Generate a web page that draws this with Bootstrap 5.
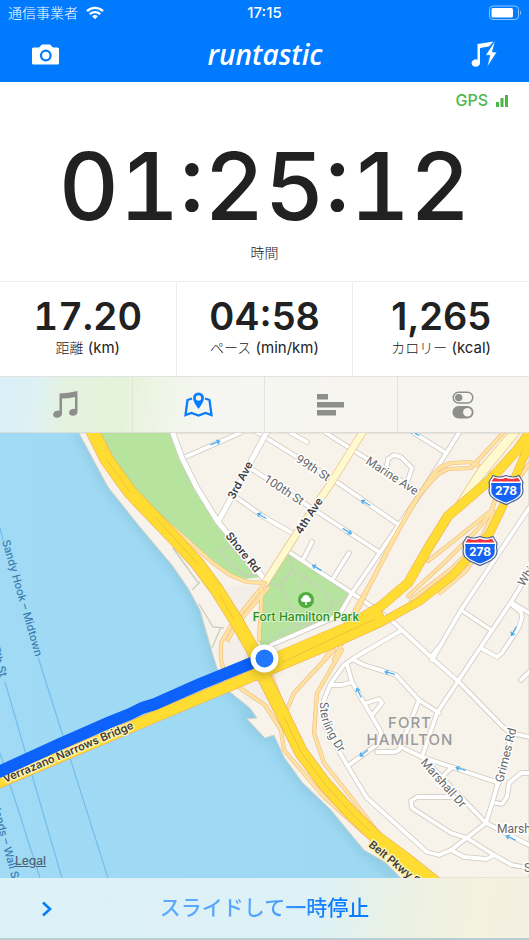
<!DOCTYPE html>
<html lang="ja">
<head>
<meta charset="utf-8">
<meta name="viewport" content="width=device-width, initial-scale=1">
<title>runtastic</title>
<link href="https://cdn.jsdelivr.net/npm/bootstrap@5.3.0/dist/css/bootstrap.min.css" rel="stylesheet">
<style>
  body { font-family: Inter, "Noto Sans CJK JP", sans-serif; color: #212121; background: #fff; }
  svg { display: block; }
  .app-head { background: #007aff; color: #fff; }
  .status-row { height: 26px; font-size: 14px; line-height: 26px; }
  .status-row .carrier { font-weight: 300; }
  .status-row .clock { font-weight: 500; font-size: 15px; }
  .brand-row { height: 56px; }
  .brand { font: italic 600 28px/54px "Open Sans", sans-serif; }
  .plain { background: none; border: 0; padding: 0; color: inherit; }
  .gps { color: #4cb648; font-size: 16px; font-weight: 500; line-height: 20px; padding: 8px 21px 0 0; }
  .timer-panel { height: 199px; }
  .timer { font-size: 93px; font-weight: 500; line-height: 100px; margin-top: 26px; font-variant-numeric: tabular-nums; }
  .caption { font-size: 14px; font-weight: 300; line-height: 20px; }
  .timer + .caption { margin-top: 7px; }
  .stats { border-top: 1px solid #ececec; border-bottom: 1px solid #e2e2e0; height: 96px; }
  .stats > div + div { border-left: 1px solid #ececec; }
  .stat-value { font-size: 38px; font-weight: 600; line-height: 38px; padding-top: 15px; box-sizing: content-box; }
  .stat-value.even { font-variant-numeric: tabular-nums; }
  .stats .caption { font-size: 15px; font-weight: 400; line-height: 26px; }
  .stats .jp { font-weight: 300; font-size: 14px; }
  .tabs { height: 56px; color: #8e8e8c; border-bottom: 1px solid #dcdcd8;
    background: linear-gradient(97deg, #d9f0f9 0, #def1f3 7%, #e5f2df 13%, #e6f3da 24%, #f1f5e9 32%, #f5f6f2 40%, #f7f5f0 70%, #f6f5f0 100%); }
  .tabs button + button { border-left: 1px solid #e1e4dc; }
  .tabs .current { color: #0a7cff; }
  .legal { left: 15px; bottom: 9px; font-size: 12px; line-height: 16px; font-weight: 500; color: #4c6473; }
  .map svg { width: 100%; height: auto; }
  .map text { font-family: Inter, sans-serif; paint-order: stroke; stroke-linejoin: round; }
  .case, .road { fill: none; stroke-linecap: round; stroke-linejoin: round; }
  .map .street text { font-family: Roboto, sans-serif; font-size: 12px; fill: #666; stroke: #fff; stroke-width: 3px; }
  .avenue text { font-size: 11px; font-weight: 600; fill: #3d3d3d; stroke: #fff; stroke-width: 3px; }
  .map .avenue .on-highway { stroke: #fff3b0; }
  .ferry text { font-size: 11px; font-weight: 500; fill: #3d7db3; }
  .slide-bar { height: 62px; color: #0a7cff; border-bottom: 2px solid #b9cdd3;
    background: linear-gradient(100deg, #dcf1f8 0, #ddf1f6 60%, #ebf1e4 75%, #f4f1df 90%, #f4f0e2 100%); }
  .slide-bar .words { font-size: 21px; font-weight: 500; line-height: 32px;
    background: linear-gradient(90deg, #5fa9fb 0, #55a4fb 50%, #0a7cff 82%); -webkit-background-clip: text; background-clip: text; color: transparent; }
  .slide-bar svg { left: 41px; top: 23px; }
</style>
<script src="https://cdn.jsdelivr.net/npm/bootstrap@5.3.0/dist/js/bootstrap.bundle.min.js"></script>
</head>
<body>
<div class="d-flex flex-column min-vh-100">
  <header class="app-head">
    <div class="status-row row g-0 px-2">
      <div class="col d-flex align-items-center gap-2">
        <span class="carrier">通信事業者</span>
        <svg width="18" height="14" viewBox="0 0 18 14" aria-hidden="true"><g fill="none" stroke="#fff" stroke-width="2.4"><path d="M1 5.1a11.6 11.6 0 0 1 16 0"/><path d="M3.8 8.2a7.6 7.6 0 0 1 10.4 0"/></g><path d="M9 13.2 6.2 10.3a4.2 4.2 0 0 1 5.6 0z" fill="#fff"/></svg>
      </div>
      <div class="col-auto clock">17:15</div>
      <div class="col d-flex justify-content-end align-items-center">
        <svg width="33" height="16" viewBox="0 0 33 16" aria-hidden="true"><rect x="1.500" y="1" width="29" height="13.500" rx="3.500" fill="none" stroke="#8fc5ff"/><rect x="3.500" y="3" width="21.500" height="9.500" rx="1.500" fill="#fff"/><path d="M32 5.500v4.500q1-.5 1-2.200T32 5.500" fill="#8fc5ff"/></svg>
      </div>
    </div>
    <div class="brand-row d-flex justify-content-between align-items-center px-4">
      <button class="plain ms-2" aria-label="カメラ">
        <svg width="27" height="21" viewBox="0 0 27 21"><path d="M1.500 3.500H7L10 .5h8l3 3h4.500Q27 3.500 27 5v14q0 1.500-1.500 1.500h-24Q0 20.500 0 19V5q0-1.500 1.500-1.500z" fill="#fff"/><circle cx="13.800" cy="11.500" r="4.800" fill="#fff" stroke="#007aff" stroke-width="2.200"/></svg>
      </button>
      <div class="brand">runtastic</div>
      <button class="plain me-2" aria-label="パワーソング">
        <svg width="26" height="28" viewBox="0 0 26 28"><path d="M6.500 4Q15 2.500 22.500 1.500L18 6.500 9 8V23a4.200 3.700 0 1 1-2.500-3.300z" fill="#fff"/><path d="M24.500 0 14.500 15.300h4.300L16 27.500 26 12h-4.600z" fill="#fff" stroke="#007aff" stroke-width=".7"/></svg>
      </button>
    </div>
  </header>

  <main class="d-flex flex-column flex-grow-1">
    <section class="timer-panel text-center">
      <div class="gps d-flex justify-content-end align-items-center gap-2">GPS
        <svg width="12" height="13" viewBox="0 0 12 13" fill="#4cb648" aria-hidden="true"><path d="M0 8h3v5H0zM4.500 4h3v9h-3zM9 1h3v12H9z"/></svg>
      </div>
      <div class="timer">01:25:12</div>
      <div class="caption">時間</div>
    </section>

    <section class="stats row g-0 text-center">
      <div class="col"><div class="stat-value even">17.20</div><div class="caption"><span class="jp">距離</span> (km)</div></div>
      <div class="col"><div class="stat-value">04:58</div><div class="caption"><span class="jp">ペース</span> (min/km)</div></div>
      <div class="col"><div class="stat-value">1,265</div><div class="caption"><span class="jp">カロリー</span> (kcal)</div></div>
    </section>

    <nav class="tabs row g-0">
      <button class="plain col d-flex justify-content-center align-items-center" aria-label="音楽">
        <svg width="25" height="27" viewBox="0 0 25 27" fill="currentColor"><path d="M6.500 2.500Q15 2 24.500 0v20.500a4.300 3.500-15 1 1-2.500-2.600V6Q15 7.500 9 7.500V22.500a4.500 3.500-15 1 1-2.500-2.800z"/></svg>
      </button>
      <button class="plain current col d-flex justify-content-center align-items-center" aria-label="地図">
        <svg width="29" height="26" viewBox="0 0 29 26"><path d="M8 6.500 3.500 8 1.500 23l6-2 7 2.500 7-2.500 6 2L25.500 8 21 6.500" fill="none" stroke="currentColor" stroke-width="2.300"/><path d="M14.500 17Q9 9.500 9 6a5.500 5.500 0 0 1 11 0q0 3.500-5.500 11z" fill="currentColor"/><circle cx="14.500" cy="6" r="2.700" fill="#f1f5e9"/></svg>
      </button>
      <button class="plain col d-flex justify-content-center align-items-center" aria-label="統計">
        <svg width="27" height="22" viewBox="0 0 27 22" fill="currentColor"><path d="M0 0h11v5.500H0zM0 8h27v5.500H0zM0 16h19v5.500H0z"/></svg>
      </button>
      <button class="plain col d-flex justify-content-center align-items-center" aria-label="設定">
        <svg width="22" height="28" viewBox="0 0 22 28"><rect x="1.200" y="1.200" width="19.600" height="10.800" rx="5.400" fill="none" stroke="currentColor" stroke-width="1.500"/><circle cx="6.700" cy="6.600" r="3.700" fill="currentColor"/><rect x=".5" y="15" width="21" height="12.500" rx="6.250" fill="currentColor"/><circle cx="15.400" cy="21.200" r="4.300" fill="#f6f5f0"/></svg>
      </button>
    </nav>

    <section class="map position-relative">
      <svg viewBox="0 433 529 445" role="img" aria-label="地図">
        <defs>
          <linearGradient id="sheen" x1="0" x2="1"><stop offset="0" stop-color="#a0daf4"/><stop offset="1" stop-color="#9dd8f2"/></linearGradient>
          <filter id="soft" x="-20%" y="-20%" width="140%" height="140%"><feGaussianBlur stdDeviation="5"/></filter>
          <g id="shield">
            <path d="M-13-14.500Q-7-11.500 0-14.500 7-11.500 13-14.500L17-8Q16-4 17 0C17 8 9 11 0 14.500-9 11-17 8-17 0Q-16-4-17-8z" fill="#fff" stroke="#4f6795" stroke-width="1.200"/>
            <path d="M-12-12.200Q-6-10 0-12.300 6-10 12-12.200L14.500-8.500H-14.500z" fill="#ef3340"/>
            <path d="M-15-7H15Q14-3 14.800 0C14.800 7 8 9.500 0 12.500-8 9.500-14.800 7-14.800 0Q-14-3-15-7z" fill="#1463f3"/>
            <text y="5" text-anchor="middle" font-size="12" font-weight="700" fill="#fff">278</text>
          </g>
          <g id="arr" fill="none" stroke="#4aaef0" stroke-width="1.300"><path d="M-5 0H5M2-2.200 5 0 2 2.200"/></g>
          <g id="streets">
            <path d="M183 458 240 433M250 468 379 552M255 431 331 478 399 525M326 433 421 493M414 433 446 453M291 433 307 442M237 498 264 517 292 533"/>
            <path d="M289 552 352 593 391 620 434 660 459 682 503 727 511 733 529 737"/>
            <path d="M459 433 421 493 352 593 341 612 331 619 271 645"/>
            <path d="M304 558 312 542M334 577 349 553M387 465 388 459 394 455 401 457 412 468 407 483"/>
            <path d="M529 508 461 610 432 660M461 610 491 630M529 573 511 602 472 660 437 713 422 757M511 602 529 613"/>
            <path d="M513 606 521 612 522 618 519 627 502 653 497 657 481 648M521 680 529 672M431 657 437 649"/>
            <path d="M402 630 354 658 344 665 331 683 324 700 325 727 347 765 367 798 427 852 439 855 451 850 486 823 494 797 511 735"/>
            <path d="M354 660 364 665 396 675 419 700 439 713M347 665 352 682 364 703 381 732 379 743 349 765M331 685 342 685 352 682"/>
            <path d="M366 703 379 699 382 703 379 707 372 715M419 700 406 733 399 750 395 752 377 752M401 747 422 757 499 783"/>
            <path d="M422 757 486 823 529 845M452 767 441 778M454 797 417 797 411 801 412 808 451 833 467 838 494 855 512 865 529 868"/>
            <path d="M451 850 464 857 487 859 494 855M496 803 502 804 507 797 509 783 521 773 529 773"/>
          </g>
          <g id="ramps">
            <path d="M324 660 351 617 374 577 411 507 431 477 440 467 451 463 470 462 482 467 492 474M510 490 496 497 491 513 477 530 444 563 408 596"/>
            <path d="M334 660 364 597 392 541 420 494 438 474 448 469 471 468 503 433"/>
            <path d="M411 600 451 569 480 541 494 512M428 561 451 543 491 511 496 497"/>
            <path d="M529 464 511 490 490 536 465 572 440 593"/>
            <path d="M143 502 187 540 213 563 230 575 247 582 265 583 230 627 221 643 221 660 225 675 240 688 265 705 281 730 284 750 324 797 364 833"/>
            <path d="M268 588 236 625 228 640M262 590 259 640"/>
            <path d="M342 650 317 693 314 733 324 763 351 797 381 837M334 650 306 680 294 693 286 712M272 677 292 730"/>
          </g>
          <path id="belt" d="M91 428 107 460 130 492 173 537 197 563 217 590 237 622 253 650 264 677 284 717 301 752 324 783 351 813 377 838 404 858 434 882"/>
          <path id="bridge" d="M-5 784 264 671M258 668 300 649 345 630 378 616"/>
          <path id="north" d="M258 665 300 647 345 628 381 606 408 583 427 550 448 516 490 480 518 449 533 428"/>
          <path id="south" d="M258 676 331 645 380 623 420 601 452 576 471 555 490 533 503 506 531 440"/>
        </defs>

        <rect y="433" width="529" height="445" fill="url(#sheen)"/>
        <path d="M79 433 108 487 140 527 172 565 188 588 200 610 213 655 220 677 230 692 250 708 257 718 247 719 265 738 274 735 284 757 302 782 331 810 364 850 399 878" fill="none" stroke="#82bdd6" stroke-width="10" opacity=".5" filter="url(#soft)"/>
        <g fill="none" stroke="#74bdec" stroke-width="1.200"><path d="M0 528 3 540M38 657 108 878M5 682 32 775 62 878M0 753 40 878"/></g>
        <path d="M79 433 108 487 140 527 172 565 188 588 200 610 213 655 220 677 230 692 250 708 257 718 247 719 265 738 274 735 284 757 302 782 331 810 364 850 385 862 401 878H529V433z" fill="#f7f3ea" stroke="#d8d3c8"/>
        <path d="M225 585 260 586 237 620zM214 650 240 635 258 660 268 700 245 700z" fill="#f4eee8"/>
        <path d="M98 433H173L182 458 197 488 218 522 233 540 261 577 240 580 228 572 173 530 133 490z" fill="#b6e49e"/>
        <path d="M289 553 352 594 340 618 270 648 260 645 261 605 267 585z" fill="#b6e49e"/>
        <g fill="none" stroke="#c9cdbd" stroke-width="1.300"><path d="M218 550 230 546 256 575 245 576zM289 553 292 570 280 586 267 582M292 570 305 577 325 593 333 605 352 594M280 586 292 610 297 625 318 623 333 605M305 577 300 590M297 625 269 640"/><path d="M173 548 196 580 199 583M192 590 200 582M199 604 213 627 224 628M221 627 212 648"/></g>

        <use href="#streets" class="case" stroke="#cfcac1" stroke-width="5.400"/>
        <use href="#streets" class="road" stroke="#fff" stroke-width="3.800"/>
        <path class="case" d="M171 428 182 458 197 488 218 522 233 540 265 580M269 428 218 522" stroke="#cfcac1" stroke-width="6.500"/>
        <path class="road" d="M171 428 182 458 197 488 218 522 233 540 265 580M269 428 218 522" stroke="#fff" stroke-width="5"/>
        <path class="case" d="M364 430 331 483 297 533 265 583" stroke="#eec58c" stroke-width="8"/>
        <path class="road" d="M364 430 331 483 297 533 265 583" stroke="#fff9cf" stroke-width="6.500"/>
        <use href="#ramps" class="case" stroke="#f2bd85" stroke-width="4.200"/>
        <use href="#ramps" class="road" stroke="#fee2a0" stroke-width="3"/>
        <path d="M449 514 479 467 508 433H520L490 470 457 511z" fill="#fff9cf" stroke="#eec58c"/>
        <use href="#belt" class="case" stroke="#eeaa60" stroke-width="14"/>
        <use href="#bridge" class="case" stroke="#eeaa60" stroke-width="12"/>
        <use href="#north" class="case" stroke="#eeaa60" stroke-width="10"/>
        <use href="#south" class="case" stroke="#eeaa60" stroke-width="8.500"/>
        <use href="#belt" class="road" stroke="#ffdc32" stroke-width="12.800"/>
        <use href="#bridge" class="road" stroke="#ffdc32" stroke-width="10.800"/>
        <use href="#north" class="road" stroke="#ffdc32" stroke-width="9"/>
        <use href="#south" class="road" stroke="#ffdc32" stroke-width="7.500"/>
        <path class="road" d="M107 460 130 492M155 517 197 563M220 595 234 620M284 717 301 752 324 783 351 813 370 831M283 662 340 635 375 619" stroke="#f3c13c"/>

        <g>
          <use href="#arr" transform="translate(215 443) rotate(-22)"/>
          <use href="#arr" transform="translate(262 516) rotate(210)"/>
          <use href="#arr" transform="translate(366 503) rotate(210)"/>
          <use href="#arr" transform="translate(347 531) rotate(31)"/>
          <use href="#arr" transform="translate(317 568) rotate(211)"/>
          <use href="#arr" transform="translate(415 433) rotate(211)"/>
          <use href="#arr" transform="translate(514 631) rotate(119)"/>
          <use href="#arr" transform="translate(390 673) rotate(195)"/>
          <use href="#arr" transform="translate(359 693) rotate(243)"/>
          <use href="#arr" transform="translate(364 753) rotate(142)"/>
          <use href="#arr" transform="translate(461 769) rotate(197)"/>
          <use href="#arr" transform="translate(511 838) rotate(205)"/>
        </g>

        <g class="ferry">
          <text transform="translate(2 541) rotate(74)">Sandy Hook – Midtown</text>
          <text transform="translate(-8 648) rotate(75)">7th St</text>
          <text transform="translate(-13 786) rotate(75)">Highlands – Wall St</text>
        </g>
        <g class="avenue">
          <text transform="translate(234 500) rotate(-62)">3rd Ave</text>
          <text transform="translate(301 535) rotate(-57)">4th Ave</text>
          <text transform="translate(225 536) rotate(51)">Shore Rd</text>
          <text class="on-highway" transform="translate(5 783) rotate(-23)">Verrazano Narrows Bridge</text>
          <text class="on-highway" transform="translate(368 846) rotate(39)">Belt Pkwy S</text>
        </g>
        <path id="sterling" d="M320 702C319 722 328 738 350 768" fill="none"/>
        <g class="street">
          <text transform="translate(295 461) rotate(33)">99th St</text>
          <text transform="translate(263 481) rotate(33)">100th St</text>
          <text transform="translate(365 463) rotate(33)">Marine Ave</text>
          <text transform="translate(524 587) rotate(-58)">White Pl</text>
          <text><textPath href="#sterling">Sterling Dr</textPath></text>
          <text transform="translate(420 763) rotate(48)">Marshall Dr</text>
          <text transform="translate(503 783) rotate(-76)">Grimes Rd</text>
          <text x="497" y="833">Marshall</text>
          <text x="524" y="872">St</text>
        </g>
        <g font-size="15" font-weight="500" fill="#999a9c" stroke="#f7f3ea" stroke-width="2" letter-spacing="1" text-anchor="middle"><text x="410" y="728">FORT</text><text x="410" y="745">HAMILTON</text></g>

        <circle cx="306" cy="600" r="8" fill="#51ad40"/>
        <path d="M305.300 605v-3q-4.300.5-4.300-2.200 0-1.500 1.500-2 .5-2.800 3.500-2.800t3.500 2.800q1.500.5 1.500 2 0 2.700-4.300 2.200v3z" fill="#fff"/>
        <text x="306" y="621" text-anchor="middle" font-size="12" font-weight="500" fill="#2c8f1e" stroke="#e2f4d5" stroke-width="2">Fort Hamilton Park</text>

        <use href="#shield" x="506" y="490"/>
        <use href="#shield" x="480" y="551"/>

        <path d="M-8 775 60 744 110 722 130 714 142 708 155 704 200 684 264 658" fill="none" stroke="#0c62fb" stroke-width="12" stroke-linejoin="round"/>
        <circle cx="264" cy="661" r="15" fill="#000" opacity=".22" filter="url(#soft)"/>
        <circle cx="264.500" cy="658.500" r="14" fill="#fff"/>
        <circle cx="264.500" cy="658.500" r="9" fill="#2178fa"/>
      </svg>
      <a href="#legal" class="legal position-absolute" id="legal">Legal</a>
    </section>

    <button class="plain slide-bar position-relative w-100 flex-grow-1">
      <svg class="position-absolute" width="12" height="16" viewBox="0 0 12 16" aria-hidden="true"><path d="M2 1.500 9 8l-7 6.500" fill="none" stroke="#0a7cff" stroke-width="2.600"/></svg>
      <span class="words">スライドして一時停止</span>
    </button>
  </main>
</div>
</body>
</html>
